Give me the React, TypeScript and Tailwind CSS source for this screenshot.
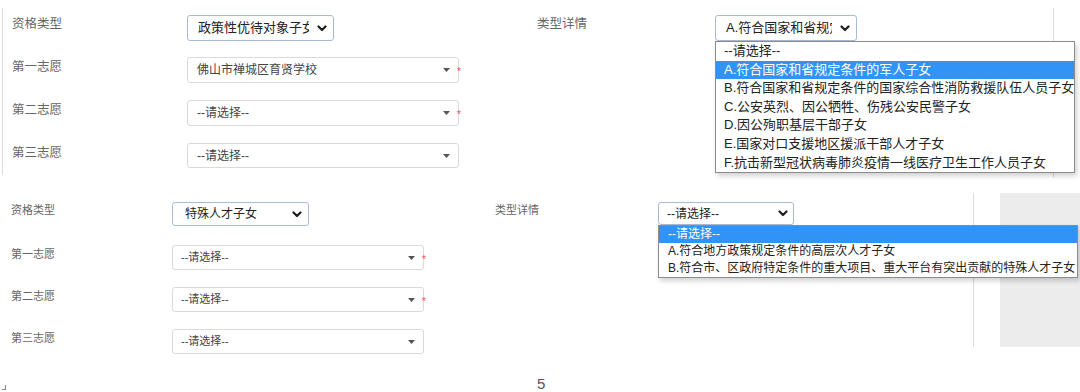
import React from 'react'

// ─── Types ──────────────────────────────────────────
interface Choice {
    label: string
    required?: boolean
}

const FONT = "font-['Liberation_Sans','Noto_Sans_CJK_SC',sans-serif]"

const TOP_OPTIONS = [
    '--请选择--',
    'A.符合国家和省规定条件的军人子女',
    'B.符合国家和省规定条件的国家综合性消防救援队伍人员子女',
    'C.公安英烈、因公牺牲、伤残公安民警子女',
    'D.因公殉职基层干部子女',
    'E.国家对口支援地区援派干部人才子女',
    'F.抗击新型冠状病毒肺炎疫情一线医疗卫生工作人员子女',
]

const BOTTOM_OPTIONS = [
    '--请选择--',
    'A.符合地方政策规定条件的高层次人才子女',
    'B.符合市、区政府特定条件的重大项目、重大平台有突出贡献的特殊人才子女',
]

const TOP_WISHES: Choice[] = [
    { label: '佛山市禅城区育贤学校', required: true },
    { label: '--请选择--', required: true },
    { label: '--请选择--' },
]

const BOTTOM_WISHES: Choice[] = [
    { label: '--请选择--', required: true },
    { label: '--请选择--', required: true },
    { label: '--请选择--' },
]

// ─── Bits ───────────────────────────────────────────
function Chevron() {
    return (
        <svg width="10" height="7" viewBox="0 0 10 7" className="shrink-0">
            <path d="M1.5 1.5 L5 5 L8.5 1.5" fill="none" stroke="#1f1f1f" strokeWidth="2.2" strokeLinecap="round" strokeLinejoin="round" />
        </svg>
    )
}

function Caret() {
    return (
        <svg width="7" height="4" viewBox="0 0 7 4" className="shrink-0">
            <path d="M0 0 H7 L3.5 4 Z" fill="#555" />
        </svg>
    )
}

// native-looking closed select
function SelectBox({ text, size }: { text: string; size: 'lg' | 'md' | 'sm' }) {
    const pad =
        size === 'lg' ? 'pl-[10px] pr-[6px] text-[13px]'
            : size === 'md' ? 'pl-[12px] pr-[6px] text-[12px]'
                : 'pl-[8px] pr-[5px] text-[12px]'
    return (
        <div className={`flex h-full w-full items-center rounded-[3px] border border-[#a9bbd3] bg-white ${pad} text-[#222]`}>
            <span className="flex-1 overflow-hidden whitespace-nowrap">{text}</span>
            <span className={size === 'sm' ? 'pl-[6px]' : 'pl-[8px]'}><Chevron /></span>
        </div>
    )
}

function WishField({ choice, size }: { choice: Choice; size: 'lg' | 'sm' }) {
    return (
        <div className={`relative flex h-full w-full items-center rounded-[3px] border border-[#dadada] bg-white ${size === 'lg' ? 'pl-[9px] pr-[8px] text-[12px]' : 'pl-[8px] pr-[8px] text-[11px]'} text-[#444]`}>
            <span className="flex-1 truncate">{choice.label}</span>
            <Caret />
            {choice.required && (
                <span className="absolute right-[-3px] top-[8px] text-[11px] leading-none text-[#f05a5a]">*</span>
            )}
        </div>
    )
}

function OptionList({ options, active, size, width }: { options: string[]; active: number; size: 'lg' | 'sm'; width: string }) {
    return (
        <div className={`absolute left-0 top-full z-10 border border-[#8c8c8c] bg-white shadow-[2px_3px_5px_rgba(0,0,0,0.18)] ${width}`}>
            {options.map((opt, i) => (
                <div
                    key={opt}
                    className={`whitespace-nowrap ${size === 'lg' ? 'h-[18.6px] pl-[8px] text-[13px] leading-[18.6px]' : 'h-[17px] pl-[9px] text-[12px] leading-[17px]'} ${i === active ? 'bg-[#3193f5] text-white' : 'text-[#222]'}`}
                >
                    {opt}
                </div>
            ))}
        </div>
    )
}

// ─── Page ───────────────────────────────────────────
export default function App() {
    return (
        <div className={`h-[392px] w-[1080px] overflow-hidden bg-white ${FONT}`}>
            {/* ─── Top capture: 政策性优待对象子女 ─── */}
            <section className="flex h-[180px]">
                <div className="ml-[2px] mt-[8px] h-[167px] w-[535px] border-l border-[#dedede] pl-[9px] pt-[7px]">
                    <div className="flex h-[26px] items-start">
                        <span className="w-[175px] pt-[1px] text-[12.5px] leading-[16px] text-[#666]">资格类型</span>
                        <div className="h-full w-[147px]">
                            <SelectBox text="政策性优待对象子女" size="lg" />
                        </div>
                    </div>
                    {TOP_WISHES.map((w, i) => (
                        <div key={i} className={`flex items-start ${i === 0 ? 'mt-[16px] h-[26px]' : i === 1 ? 'mt-[17px] h-[26px]' : 'mt-[17px] h-[25px]'}`}>
                            <span className="w-[175px] pt-[2px] text-[12.5px] leading-[16px] text-[#666]">
                                {['第一志愿', '第二志愿', '第三志愿'][i]}
                            </span>
                            <div className="h-full w-[272px]">
                                <WishField choice={w} size="lg" />
                            </div>
                        </div>
                    ))}
                </div>

                <div className="flex w-[516px] items-start pt-[15px]">
                    <span className="w-[178px] pt-[1px] text-[12.5px] leading-[16px] text-[#666]">类型详情</span>
                    <div className="relative h-[26px] w-[142px]">
                        <SelectBox text="A.符合国家和省规定条件的军人子女" size="lg" />
                        <OptionList options={TOP_OPTIONS} active={1} size="lg" width="w-[360px]" />
                    </div>
                </div>

                <div className="mt-[8px] h-[169px] w-px bg-[#dcdcdc]" />
            </section>

            {/* ─── Bottom capture: 特殊人才子女 ─── */}
            <section className="flex h-[212px] flex-col">
                <div className="flex h-[192px]">
                    <div className="w-[495px] pl-[11px] pt-[22px]">
                        <div className="flex h-[24px] items-start">
                            <span className="w-[161px] pt-[1px] text-[11px] leading-[14px] text-[#666]">资格类型</span>
                            <div className="h-full w-[137px]">
                                <SelectBox text="特殊人才子女" size="md" />
                            </div>
                        </div>
                        {BOTTOM_WISHES.map((w, i) => (
                            <div key={i} className={`flex h-[25px] items-start ${i === 0 ? 'mt-[19px]' : 'mt-[17px]'}`}>
                                <span className="w-[161px] pt-[2px] text-[11px] leading-[14px] text-[#666]">
                                    {['第一志愿', '第二志愿', '第三志愿'][i]}
                                </span>
                                <div className="h-full w-[252px]">
                                    <WishField choice={w} size="sm" />
                                </div>
                            </div>
                        ))}
                    </div>

                    <div className="flex w-[478px] items-start pt-[22px]">
                        <span className="w-[163px] pt-[1px] text-[11px] leading-[14px] text-[#666]">类型详情</span>
                        <div className="relative h-[23px] w-[136px]">
                            <SelectBox text="--请选择--" size="sm" />
                            <OptionList options={BOTTOM_OPTIONS} active={0} size="sm" width="w-[420px]" />
                        </div>
                    </div>

                    <div className="mt-[13px] h-[154px] w-px bg-[#dcdcdc]" />
                    <div className="ml-[26px] mt-[13px] h-[154px] flex-1 bg-[#ececec]" />
                </div>

                {/* page footer */}
                <div className="flex h-[20px] items-end">
                    <div className="mb-[2px] ml-[2px] h-[5px] w-[4px] border-b border-r border-[#888]" />
                    <span className="ml-[531px] text-[15px] leading-[16px] text-[#555]">5</span>
                </div>
            </section>
        </div>
    )
}
